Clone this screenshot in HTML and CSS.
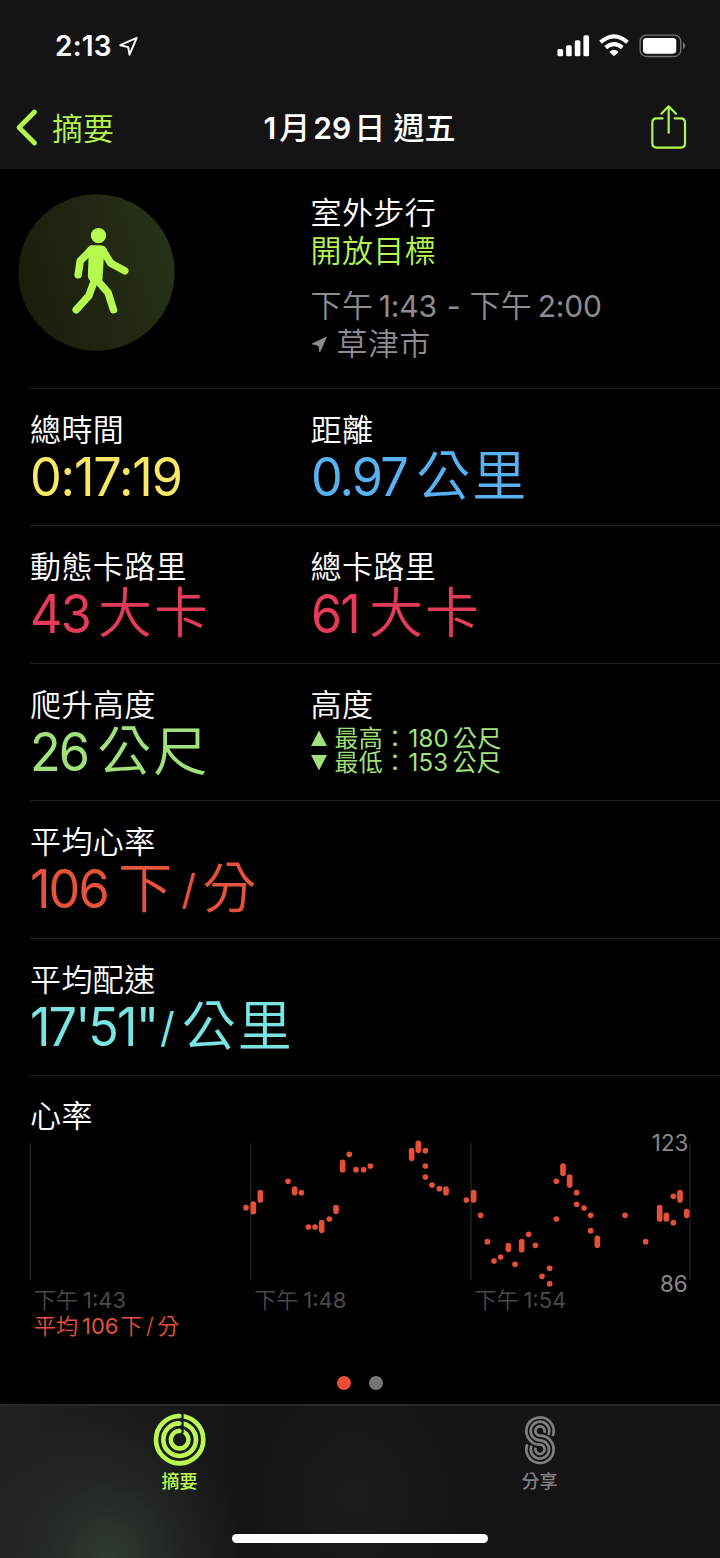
FILE: index.html
```html
<!DOCTYPE html>
<html lang="zh-Hant">
<head>
<meta charset="utf-8">
<meta name="viewport" content="width=device-width, initial-scale=1">
<title>1月29日 週五</title>
<link rel="stylesheet" href="styles.css">
</head>
<body>
<div class="phone">
  <header class="top">
    <div class="status">
      <div class="status-left">
        <span class="clock">2:13</span>
        <svg class="loc-outline" viewBox="352 102 64 68"><path d="M359 132L409 110L387 161L383 138Z"/></svg>
      </div>
      <svg class="status-icons" viewBox="590 98 392 76">
        <g fill="#fff">
          <rect x="594" y="146" width="17" height="22" rx="5"/>
          <rect x="620" y="135" width="17" height="33" rx="5"/>
          <rect x="646" y="120" width="17" height="48" rx="5"/>
          <rect x="672" y="105" width="17" height="63" rx="5"/>
          <path d="M764 165L753 155Q764 147 775 155Z" stroke="#fff" stroke-width="4" stroke-linejoin="round"/>
        </g>
        <g fill="none" stroke="#fff" stroke-width="12">
          <path d="M723.500 126Q764 90 804.500 126"/>
          <path d="M739 142Q764 121 789 142"/>
        </g>
        <rect x="842.500" y="104.500" width="122" height="64" rx="19" fill="none" stroke="#747474" stroke-width="4"/>
        <rect x="851" y="113" width="100" height="47" rx="10" fill="#fff"/>
        <path d="M971 126Q978 130 978 136.500T971 147Z" fill="#747474"/>
      </svg>
    </div>
    <nav class="nav">
      <a class="back">
        <svg class="chevron" viewBox="0 0 22 38"><path d="M18.500 3L3 18.500L18.500 34"/></svg>
        <span>摘要</span>
      </a>
      <h1 class="title"><span class="t-num">1</span>月<span class="t-num t-29">29</span>日 週五</h1>
      <svg class="share" viewBox="868 306 117 144"><path d="M909 352H891Q878 352 878 365V427Q878 440 891 440H963Q976 440 976 427V365Q976 352 963 352H945M927 395V317M905 338L927 316L949 338"/></svg>
    </nav>
  </header>

  <main class="content">
    <section class="summary">
      <svg class="badge-walk" viewBox="55 41 472 472">
        <defs><linearGradient id="disc" x1="0" y1=".65" x2="1" y2=".35"><stop offset="0" stop-color="#1b1d0a"/><stop offset=".5" stop-color="#202611"/><stop offset="1" stop-color="#273218"/></linearGradient></defs>
        <circle cx="291" cy="277" r="235" fill="url(#disc)"/>
        <g fill="#b7fa4f"><circle cx="297" cy="166" r="23"/><path class="torso" d="M276 199H304Q314 200 319 209L309 232L305 297L288 308Q269 300 269 287L271 231L261 215Q268 201 276 199Z"/></g>
        <g class="limbs"><path d="M277 208L242 242L236 284"/><path d="M309 209L334 249L376 272"/><path d="M286 298L268 347L230 389"/><path d="M293 300L326 338L342 389"/></g>
      </svg>
      <div class="summary-text">
        <p class="label">室外步行</p>
        <p class="label goal">開放目標</p>
        <p class="label when"><span>下午</span><span class="time-a">1:43</span><span class="dash">-</span><span>下午</span><span class="time-b">2:00</span></p>
        <p class="label place"><svg class="loc-fill" viewBox="62 470 50 52"><path d="M65 494L108 474L88 518L85 499Z"/></svg><span>草津市</span></p>
      </div>
    </section>

    <section class="row">
      <div><p class="label">總時間</p><p class="value yellow"><span class="n n-time">0:17:19</span></p></div>
      <div><p class="label">距離</p><p class="value blue"><span class="n n-dist">0.97</span><span class="unit">公里</span></p></div>
    </section>
    <section class="row">
      <div><p class="label">動態卡路里</p><p class="value pink"><span class="n n-active">43</span><span class="unit">大卡</span></p></div>
      <div><p class="label">總卡路里</p><p class="value pink"><span class="n n-total">61</span><span class="unit">大卡</span></p></div>
    </section>
    <section class="row">
      <div><p class="label">爬升高度</p><p class="value green"><span class="n n-climb">26</span><span class="unit">公尺</span></p></div>
      <div>
        <p class="label label-alt">高度</p>
        <p class="alt green"><svg viewBox="0 0 15 16"><path d="M7.500 .5L15 15H0Z"/></svg><span>最高：</span><span class="alt-n">180</span><span>公尺</span></p>
        <p class="alt green"><svg viewBox="0 0 15 16"><path d="M7.500 15.500L15 1H0Z"/></svg><span>最低：</span><span class="alt-n">153</span><span>公尺</span></p>
      </div>
    </section>
    <section class="row">
      <div><p class="label">平均心率</p><p class="value red"><span class="n n-bpm">106</span><span class="unit">下</span><span class="slash">/</span><span class="unit unit-min">分</span></p></div>
    </section>
    <section class="row">
      <div><p class="label">平均配速</p><p class="value cyan"><span class="n n-pace">17'51"</span><span class="slash slash-pace">/</span><span class="unit unit-km">公里</span></p></div>
    </section>

    <section class="heart">
      <p class="label">心率</p>
      <svg class="chart" viewBox="0 165 2160 465">
        <path class="grid" d="M91 190V600M752 190V600M1413 190V600M2070 190V600"/>
        <path class="beats" d="M738 383h.1M864 304h.1M904 338h.1M925 441h.1M945 441h.1M988 417h.1M1048 223h.1M1068 269h.1M760 372V395M781 338V360M884 327V338M965 428V451M1008 383V394M1028 247V269"/>
        <path class="beats" transform="translate(1080 0)" d="M11 269h.1M31 258h.1M196 212h.1M196 258h.1M196 291h.1M216 315h.1M238 326h.1M319 360h.1M362 406h.1M382 485h.1M402 543h.1M422 531h.1M465 553h.1M506 463h.1M526 496h.1M546 589h.1M569 565h.1M569 611h.1M589 304h.1M589 417h.1M650 338h.1M650 373h.1M672 384h.1M692 406h.1M692 452h.1M795 406h.1M857 485h.1M940 349h.1M940 428h.1M155 212V235M175 190V211M258 327V338M341 338V360M445 497V508M485 485V509M609 258V280M629 291V315M712 475V496M899 383V417M919 406V417M960 338V360M980 395V406"/>
        <text class="axis" x="2065" y="212">123</text>
        <text class="axis" x="2063" y="635">86</text>
      </svg>
      <div class="ticks"><span>下午<i>1:43</i></span><span>下午<i>1:48</i></span><span>下午<i>1:54</i></span></div>
      <p class="avg red">平均<i>106</i>下<b>/</b>分</p>
    </section>
    <div class="pager"><span class="dot dot-on"></span><span class="dot"></span></div>
  </main>

  <footer class="tabs">
    <div class="tab-list">
      <a class="tab tab-on">
        <svg class="rings" viewBox="100 160 160 160">
          <g fill="none" stroke="#b9f953"><circle cx="180" cy="240" r="71" stroke-width="14"/><circle cx="180" cy="240" r="49" stroke-width="14"/><circle cx="180" cy="240" r="26.500" stroke-width="13"/></g>
          <path d="M186 160V222" stroke="#151715" stroke-width="12"/>
          <path d="M175 169.200H179.500M175 191.200H179.500M176 213.700H179.500" stroke="#b9f953" stroke-width="13.500" stroke-linecap="round"/>
        </svg>
        <span>摘要</span>
      </a>
      <a class="tab">
        <svg class="sharing" viewBox="132 59 96 151"><path d="M218.200 122A41 41 0 1 0 180 148A14 14 0 1 1 166.900 157M205.300 119A28 28 0 1 0 180 135A27.500 27.500 0 1 1 154.700 151M193.100 112A14 14 0 1 0 180 121A41 41 0 1 1 141.800 147"/></svg>
        <span>分享</span>
      </a>
    </div>
    <div class="home-bar"></div>
  </footer>
</div>
</body>
</html>
```

FILE: styles.css
```css
* { box-sizing: border-box; }
html, body { margin: 0; background: #000; }
p, h1 { margin: 0; }
svg { display: block; flex: none; overflow: visible; }
i, b { font-style: normal; font-weight: inherit; }

.phone {
  width: 720px;
  height: 1558px;
  display: flex;
  flex-direction: column;
  overflow: hidden;
  background: #000;
  color: #fff;
  font-family: Inter, "Noto Sans CJK TC", sans-serif;
  white-space: nowrap;
}

/* status bar and navigation */
.top { height: 169px; background: #141414; border-bottom: 1px solid #191919; }
.status { height: 90px; padding: 2px 33px 0 55px; display: flex; align-items: center; justify-content: space-between; }
.status-left { display: flex; align-items: center; gap: 6px; }
.clock { font-size: 28px; font-weight: 600; letter-spacing: .2px; }
.loc-outline { width: 21px; height: 23px; fill: none; stroke: #fff; stroke-width: 6; stroke-linejoin: round; }
.status-icons { width: 130.700px; height: 25.300px; }
.nav { height: 75px; padding: 0 32px 0 16px; display: grid; grid-template-columns: 1fr auto 1fr; align-items: center; }
.back { display: flex; align-items: center; gap: 14px; color: #b4f650; font-size: 31px; line-height: 38px; font-weight: 350; }
.back span { padding-top: 2px; }
.chevron { width: 22px; height: 38px; fill: none; stroke: currentColor; stroke-width: 4.800; stroke-linecap: round; stroke-linejoin: round; }
.title { font-size: 31px; line-height: 40px; font-weight: 500; padding-left: 15px; }
.t-num { font-size: 30px; font-weight: 600; margin-right: 3px; }
.t-29 { margin-left: 3px; }
.share { width: 39px; height: 48px; margin-bottom: 2px; justify-self: end; fill: none; stroke: #b4f650; stroke-width: 6.500; stroke-linecap: round; stroke-linejoin: round; }

.content { flex: 1; }
.label { font-size: 31px; line-height: 38px; letter-spacing: .4px; font-weight: 350; }

/* workout header */
.summary { height: 219px; padding: 25px 0 0 18px; display: flex; gap: 135.500px; }
.badge-walk { width: 157px; height: 157px; }
.limbs { fill: none; stroke: #b7fa4f; stroke-width: 22.500; stroke-linecap: round; stroke-linejoin: round; }
.torso { stroke: #b7fa4f; stroke-width: 8; stroke-linejoin: round; }
.goal { color: #b4f650; }
.when, .place { color: #8c8c91; }
.when { margin-top: 17px; display: flex; }
.time-a, .time-b, .dash { font-size: 30px; letter-spacing: -.2px; font-weight: 400; }
.time-a, .time-b { margin-left: 5.500px; }
.dash { margin: 0 9px 0 10px; }
.place { display: flex; align-items: center; gap: 9px; }
.loc-fill { width: 17px; height: 17px; fill: #8c8c91; stroke: #8c8c91; stroke-width: 3; stroke-linejoin: round; }

/* metric rows */
.row {
  height: 137.400px;
  margin-left: 30px;
  padding-top: 22px;
  display: grid;
  grid-template-columns: 280.500px 1fr;
  border-top: 1px solid #1e1e1e;
}
.value { display: flex; font-size: 53px; line-height: 56px; }
.n { letter-spacing: -2px; font-weight: 420; transform: scaleX(.95); transform-origin: left; }
.n-time { letter-spacing: -1.200px; }
.n-dist { margin-right: -3px; }
.n-active { margin-right: -3px; }
.n-total { margin-right: 0; }
.n-climb { margin-right: -2px; }
.n-bpm { margin-right: -1.500px; }
.unit { font-size: 54px; letter-spacing: 2px; font-weight: 350; margin-left: 8px; }
.slash { font-size: 41px; margin-left: 7px; }
.unit-min { margin-left: 6px; }
.slash-pace { margin-left: -4px; }
.unit-km { margin-left: 7px; }
.yellow { color: #f9e765; }
.blue { color: #58b2f1; }
.pink { color: #e33b58; }
.green { color: #a1e17b; }
.red { color: #e7523a; }
.cyan { color: #78e5e2; }
.label-alt { margin-bottom: 3px; }
.alt { display: flex; align-items: center; font-size: 24px; line-height: 24px; letter-spacing: .3px; font-weight: 400; }
.alt svg { width: 16px; height: 17px; margin-right: 8px; fill: currentColor; }
.alt-n { margin: 0 4px 0 1px; }

/* heart-rate chart */
.heart { margin-left: 30px; padding-top: 21px; border-top: 1px solid #1e1e1e; }
.chart { width: 720px; height: 155px; margin-left: -30px; }
.grid { stroke: #252527; stroke-width: 4; fill: none; }
.beats { stroke: #e54f36; stroke-width: 17; stroke-linecap: round; fill: none; }
.axis { fill: #88888c; font-size: 67px; text-anchor: end; }
.ticks { padding-left: 4px; display: grid; grid-template-columns: 220.200px 220.200px 1fr; color: #4a4a4c; font-size: 22px; line-height: 26px; font-weight: 350; margin-top: -3px; }
.ticks i { margin-left: 5px; font-weight: 400; }
.avg { padding-left: 4px; font-size: 22px; line-height: 26px; font-weight: 350; }
.avg b { margin: 0 3.500px; }
.avg i { margin: 0 2px 0 4px; font-weight: 400; }
.pager { display: flex; justify-content: center; gap: 18px; margin-top: 37px; }
.dot { width: 14px; height: 14px; border-radius: 50%; background: #747474; }
.dot-on { background: #ee4f34; }

/* tab bar */
.tabs {
  height: 154px;
  border-top: 2px solid #2a2a2a;
  background:
    radial-gradient(ellipse 135px 150px at 108px 152px, #303a30 0, rgba(40, 49, 40, .55) 50%, transparent 100%),
    radial-gradient(ellipse 110px 130px at 355px 90px, #1c1c1c, transparent),
    linear-gradient(90deg, #202121 0, #141414 250px);
}
.tab-list { height: 128px; display: grid; grid-template-columns: 1fr 1fr; }
.tab { padding: 7px 1px 0 0; display: flex; flex-direction: column; align-items: center; color: #808080; font-size: 18px; line-height: 26px; font-weight: 450; }
.tab-on { color: #b9f953; }
.rings { width: 53.300px; height: 53.300px; margin-bottom: 2.700px; }
.sharing { width: 32px; height: 50.300px; margin: 2px 0 3.700px; fill: none; stroke: #808080; stroke-width: 8; }
.home-bar { width: 256px; height: 9px; margin: 0 auto; border-radius: 5px; background: #fff; }
```
